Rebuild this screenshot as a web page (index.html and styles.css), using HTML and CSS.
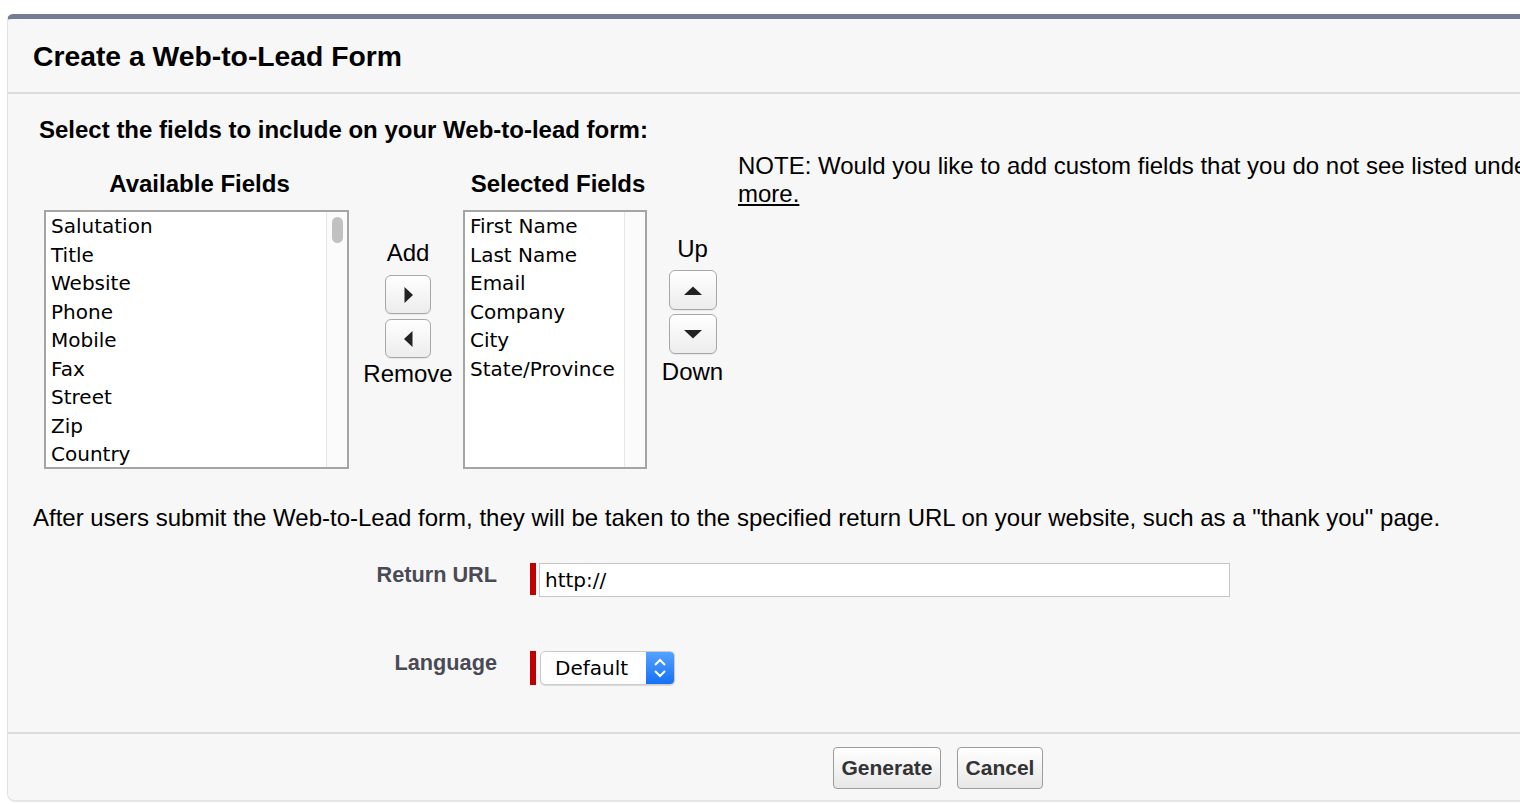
FILE: index.html
```html
<!DOCTYPE html>
<html>
<head>
<meta charset="utf-8">
<title>Create a Web-to-Lead Form</title>
<link rel="stylesheet" href="styles.css">
</head>
<body>
<div class="panel">
  <div class="head"><h2 class="title">Create a Web-to-Lead Form</h2></div>
  <div class="content">
    <p class="intro">Select the fields to include on your Web-to-lead form:</p>
    <div class="picker">
      <div class="col col-avail">
        <div class="col-title">Available Fields</div>
        <div class="listbox">
          <ul class="items">
            <li>Salutation</li>
            <li>Title</li>
            <li>Website</li>
            <li>Phone</li>
            <li>Mobile</li>
            <li>Fax</li>
            <li>Street</li>
            <li>Zip</li>
            <li>Country</li>
          </ul>
          <div class="track"><div class="thumb"></div></div>
        </div>
      </div>
      <div class="mover addrem">
        <span class="mv-label">Add</span>
        <button class="arrow-btn" type="button"><svg width="11" height="18" viewBox="0 0 11 18"><polygon points="1.5,1 10,9 1.5,17" fill="#222"/></svg></button>
        <button class="arrow-btn gap" type="button"><svg width="11" height="18" viewBox="0 0 11 18"><polygon points="9.5,1 1,9 9.5,17" fill="#222"/></svg></button>
        <span class="mv-label lower">Remove</span>
      </div>
      <div class="col col-sel">
        <div class="col-title">Selected Fields</div>
        <div class="listbox">
          <ul class="items">
            <li>First Name</li>
            <li>Last Name</li>
            <li>Email</li>
            <li>Company</li>
            <li>City</li>
            <li>State/Province</li>
          </ul>
          <div class="track"></div>
        </div>
      </div>
      <div class="mover updown">
        <span class="mv-label">Up</span>
        <button class="arrow-btn wide" type="button"><svg width="20" height="11" viewBox="0 0 20 11"><polygon points="1,10 10,1.5 19,10" fill="#222"/></svg></button>
        <button class="arrow-btn wide gap" type="button"><svg width="20" height="11" viewBox="0 0 20 11"><polygon points="1,1 10,9.5 19,1" fill="#222"/></svg></button>
        <span class="mv-label lower">Down</span>
      </div>
      <div class="note">NOTE: Would you like to add custom fields that you do not see listed under Available Fields? Click here to learn<br><a class="note-link" href="#">more.</a></div>
    </div>
    <p class="after">After users submit the Web-to-Lead form, they will be taken to the specified return URL on your website, such as a "thank you" page.</p>
    <div class="row row-url">
      <label class="lbl">Return URL</label>
      <span class="req"></span>
      <input class="text-input" type="text" value="http://">
    </div>
    <div class="row row-lang">
      <label class="lbl">Language</label>
      <span class="req tall"></span>
      <div class="select">
        <span class="select-value">Default</span>
        <span class="select-btn"><svg width="14" height="24" viewBox="0 0 14 24"><polyline points="2,9 7,4 12,9" fill="none" stroke="#fff" stroke-width="2"/><polyline points="2,15 7,20 12,15" fill="none" stroke="#fff" stroke-width="2"/></svg></span>
      </div>
    </div>
  </div>
  <div class="foot">
    <button class="btn btn-generate" type="button">Generate</button>
    <button class="btn btn-cancel" type="button">Cancel</button>
  </div>
</div>
</body>
</html>
```
FILE: styles.css
```css
html, body {
  margin: 0;
  padding: 0;
  background: #ffffff;
  overflow: hidden;
}
body {
  font-family: "Liberation Sans", Arial, sans-serif;
  color: #000;
}
.panel {
  margin: 14px -40px 0 7px;
  background: #f7f7f7;
  border-top: 5px solid #737b95;
  border-left: 1px solid #e3e3e3;
  border-bottom: 2px solid #e6e6e6;
  border-radius: 6px 0 0 8px;
}
.head {
  height: 73px;
  display: flex;
  align-items: center;
  padding-left: 25px;
  border-bottom: 2px solid #dcdcdc;
}
.title {
  margin: 0;
  font-size: 28.3px;
  line-height: 32px;
  font-weight: bold;
}
.content {
  padding: 22px 25px 47px;
}
.intro {
  margin: 0 0 8px 6px;
  font-size: 24px;
  line-height: 28px;
  font-weight: bold;
}
.picker {
  display: flex;
  align-items: flex-start;
  margin-left: 11px;
}
.col, .mover { flex-shrink: 0; }
.col-title {
  margin-top: 18px;
  margin-bottom: 12px;
  padding-left: 6px;
  font-size: 24px;
  line-height: 28px;
  font-weight: bold;
  text-align: center;
  white-space: nowrap;
}
.col-avail { width: 305px; }
.col-sel { width: 184px; }
.listbox {
  box-sizing: border-box;
  height: 259px;
  border: 2px solid #a5a5a5;
  background: #fff;
  display: flex;
}
.items {
  list-style: none;
  margin: 0;
  padding: 0 0 0 5px;
  flex: 1;
  font-family: "DejaVu Sans", sans-serif;
  font-size: 20px;
  line-height: 28.5px;
}
.items li { white-space: nowrap; }
.track {
  width: 20px;
  flex-shrink: 0;
  border-left: 1px solid #e6e6e6;
  background: #fbfbfb;
  display: flex;
  justify-content: center;
  padding-top: 5px;
}
.thumb {
  width: 11px;
  height: 26px;
  border-radius: 6px;
  background: #c1c1c1;
}
.mover {
  box-sizing: border-box;
  display: flex;
  flex-direction: column;
  align-items: center;
  font-size: 24px;
  line-height: 28px;
}
.addrem { width: 114px; padding-top: 87px; padding-left: 4px; }
.updown { width: 91px; padding-top: 83px; }
.addrem .arrow-btn:first-of-type { margin-top: 8px; }
.updown .arrow-btn:first-of-type { margin-top: 7px; }
.arrow-btn {
  width: 46px;
  height: 39px;
  padding: 0;
  display: flex;
  align-items: center;
  justify-content: center;
  border: 1px solid #a8a8a8;
  border-radius: 6px;
  background: linear-gradient(#ffffff, #ececec);
  box-shadow: 0 1px 0 rgba(0,0,0,0.06);
}
.arrow-btn.gap { margin-top: 5px; }
.arrow-btn.wide { width: 48px; height: 40px; }
.updown .arrow-btn.gap { margin-top: 4px; }
.mv-label.lower { margin-top: 2px; }
.updown .mv-label.lower { margin-top: 4px; }
.note {
  white-space: nowrap;
  font-size: 24px;
  line-height: 28px;
}
.note-link { color: #000; text-decoration: underline; }
.after {
  margin: 35px 0 0;
  font-size: 24px;
  line-height: 28px;
}
.row {
  display: flex;
  align-items: flex-start;
}
.row-url { margin-top: 31px; }
.row-lang { margin-top: 54px; }
.lbl {
  width: 464px;
  flex-shrink: 0;
  text-align: right;
  font-size: 21.7px;
  line-height: 24px;
  font-weight: bold;
  color: #4a4a56;
  margin-right: 33px;
}
.req {
  width: 6px;
  height: 32px;
  flex-shrink: 0;
  background: #c00000;
  margin-right: 3px;
}
.req.tall { height: 34px; margin-right: 4px; }
.text-input {
  box-sizing: border-box;
  width: 691px;
  height: 34px;
  margin: 0;
  border: 1px solid #c6c6c6;
  background: #fff;
  padding: 0 5px;
  font-family: "DejaVu Sans", sans-serif;
  font-size: 20px;
  color: #000;
  outline: none;
}
.select {
  box-sizing: border-box;
  width: 135px;
  height: 34px;
  display: flex;
  border: 1px solid #cbcbcb;
  border-radius: 5px;
  background: #fff;
  box-shadow: 0 1px 1px rgba(0,0,0,0.12);
  overflow: hidden;
}
.select-value {
  flex: 1;
  padding-left: 14px;
  font-family: "DejaVu Sans", sans-serif;
  font-size: 20px;
  line-height: 32px;
}
.select-btn {
  width: 28px;
  display: flex;
  align-items: center;
  justify-content: center;
  background: linear-gradient(#55a2ff, #1670f4);
}
.foot {
  border-top: 2px solid #dcdcdc;
  padding: 13px 0 11px 825px;
  display: flex;
  gap: 16px;
}
.btn {
  height: 42px;
  padding: 0;
  border: 1px solid #9c9c9c;
  border-radius: 4px;
  background: linear-gradient(#ffffff, #e7e7e7);
  font-family: "Liberation Sans", Arial, sans-serif;
  font-size: 21px;
  font-weight: bold;
  color: #333;
}
.btn-generate { width: 108px; }
.btn-cancel { width: 86px; }
```
